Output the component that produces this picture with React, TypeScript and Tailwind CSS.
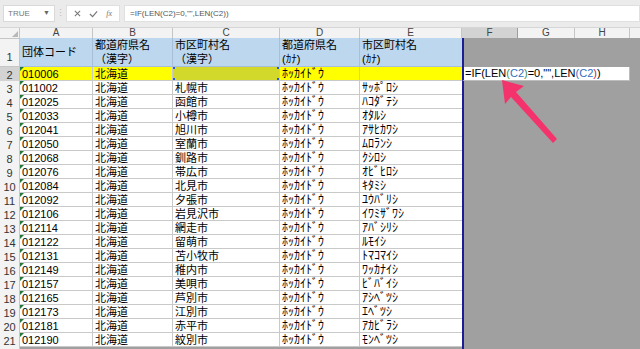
const cols = 'grid grid-cols-[20px_73px_80px_107px_80px_102px_56px_57px_55px_1fr]';

const rows: [string, string, string, string][] = [
  ['011002', '札幌市', 'ﾎｯｶｲﾄﾞｳ', 'ｻｯﾎﾟﾛｼ'],
  ['012025', '函館市', 'ﾎｯｶｲﾄﾞｳ', 'ﾊｺﾀﾞﾃｼ'],
  ['012033', '小樽市', 'ﾎｯｶｲﾄﾞｳ', 'ｵﾀﾙｼ'],
  ['012041', '旭川市', 'ﾎｯｶｲﾄﾞｳ', 'ｱｻﾋｶﾜｼ'],
  ['012050', '室蘭市', 'ﾎｯｶｲﾄﾞｳ', 'ﾑﾛﾗﾝｼ'],
  ['012068', '釧路市', 'ﾎｯｶｲﾄﾞｳ', 'ｸｼﾛｼ'],
  ['012076', '帯広市', 'ﾎｯｶｲﾄﾞｳ', 'ｵﾋﾞﾋﾛｼ'],
  ['012084', '北見市', 'ﾎｯｶｲﾄﾞｳ', 'ｷﾀﾐｼ'],
  ['012092', '夕張市', 'ﾎｯｶｲﾄﾞｳ', 'ﾕｳﾊﾞﾘｼ'],
  ['012106', '岩見沢市', 'ﾎｯｶｲﾄﾞｳ', 'ｲﾜﾐｻﾞﾜｼ'],
  ['012114', '網走市', 'ﾎｯｶｲﾄﾞｳ', 'ｱﾊﾞｼﾘｼ'],
  ['012122', '留萌市', 'ﾎｯｶｲﾄﾞｳ', 'ﾙﾓｲｼ'],
  ['012131', '苫小牧市', 'ﾎｯｶｲﾄﾞｳ', 'ﾄﾏｺﾏｲｼ'],
  ['012149', '稚内市', 'ﾎｯｶｲﾄﾞｳ', 'ﾜｯｶﾅｲｼ'],
  ['012157', '美唄市', 'ﾎｯｶｲﾄﾞｳ', 'ﾋﾞﾊﾞｲｼ'],
  ['012165', '芦別市', 'ﾎｯｶｲﾄﾞｳ', 'ｱｼﾍﾞﾂｼ'],
  ['012173', '江別市', 'ﾎｯｶｲﾄﾞｳ', 'ｴﾍﾞﾂｼ'],
  ['012181', '赤平市', 'ﾎｯｶｲﾄﾞｳ', 'ｱｶﾋﾞﾗｼ'],
  ['012190', '紋別市', 'ﾎｯｶｲﾄﾞｳ', 'ﾓﾝﾍﾞﾂｼ'],
];

const cell = 'relative h-[14px] border-r border-b border-[#c9c9c9] pl-[2px] text-[11px] leading-[14px] whitespace-nowrap overflow-hidden';
const kana = 'text-[12px]';

function Flag() {
  return <span className="absolute left-0 top-0 w-0 h-0 border-t-[4px] border-r-[4px] border-t-[#1f7a3a] border-r-transparent" />;
}

function RowHead({ n, active }: { n: number; active?: boolean }) {
  return (
    <div
      className={`flex items-center justify-center border-r border-b border-[#c6c6c6] text-[11px] text-[#333] ${
        active ? 'bg-[#d3d3d3]' : 'bg-[#f3f3f3]'
      }`}
    >
      {n}
    </div>
  );
}

function GrayTail() {
  return (
    <>
      <div className="bg-[#a0a0a0] border-l-2 border-l-[#1d1d96]" />
      <div className="bg-[#a0a0a0]" />
      <div className="bg-[#a0a0a0]" />
      <div className="bg-[#a0a0a0]" />
    </>
  );
}

export default function App() {
  return (
    <div
      className="relative w-[640px] h-[349px] overflow-hidden bg-[#a0a0a0]"
      style={{ fontFamily: '"Liberation Sans", "Noto Sans CJK JP", sans-serif' }}
    >
      {/* formula bar */}
      <div className="h-[28px] bg-[#ebebeb] flex items-start pt-[5px] border-b border-[#d6d6d6]">
        <div className="ml-[3px] w-[52px] h-[17px] bg-white border border-[#d9d9d9] flex items-center justify-between px-[4px] text-[8px] text-[#777]">
          <span>TRUE</span>
          <span className="text-[7px] text-[#666]">▼</span>
        </div>
        <div className="w-[11px] h-[17px] flex items-center justify-center text-[9px] text-[#bbb]">⋮</div>
        <div className="w-[54px] h-[17px] bg-white border border-[#e0e0e0] flex items-center justify-around px-[3px] text-[#777]">
          <svg width="7" height="7" viewBox="0 0 8 8" stroke="#777" strokeWidth="1.2">
            <path d="M1 1L7 7M7 1L1 7" />
          </svg>
          <svg width="9" height="8" viewBox="0 0 10 8" fill="none" stroke="#777" strokeWidth="1.3">
            <path d="M1 4L4 7L9 1" />
          </svg>
          <span className="italic text-[8px]" style={{ fontFamily: '"Liberation Serif", serif' }}>
            fx
          </span>
        </div>
        <div className="ml-[4px] flex-1 h-[17px] bg-white border border-[#e0e0e0] flex items-center pl-[5px] text-[8px] text-[#555]">
          =IF(LEN(C2)=0,"",LEN(C2))
        </div>
      </div>

      {/* column headers */}
      <div className={`${cols} h-[10px] bg-[#f3f3f3] text-[10px] leading-[10px] text-[#444]`}>
        <div className="relative border-r border-b border-[#c6c6c6]">
          <span className="absolute right-[1px] bottom-[1px] w-0 h-0 border-b-[6px] border-l-[6px] border-b-[#b8b8b8] border-l-transparent" />
        </div>
        {['A', 'B', 'C', 'D', 'E'].map((c) => (
          <div key={c} className="text-center border-r border-b border-[#c6c6c6]">{c}</div>
        ))}
        <div className="text-center bg-[#d3d3d3] border-r border-b border-[#9e9e9e]">F</div>
        <div className="text-center border-r border-b border-[#c6c6c6]">G</div>
        <div className="text-center border-r border-b border-[#c6c6c6]">H</div>
        <div className="border-b border-[#c6c6c6]" />
      </div>

      {/* row 1 */}
      <div className={`${cols} h-[29px]`}>
        <div className="flex items-end justify-center pb-[1px] bg-[#f3f3f3] border-r border-b border-[#c6c6c6] text-[11px] text-[#333]">1</div>
        <div className="flex items-center pl-[2px] bg-[#bdd7ee] border-r border-b border-[#a9bfd9] text-[11px]">団体コード</div>
        <div className="flex flex-col justify-center pl-[2px] bg-[#bdd7ee] border-r border-b border-[#a9bfd9] text-[11px] leading-[14px]">
          <span>都道府県名</span>
          <span>（漢字）</span>
        </div>
        <div className="flex flex-col justify-center pl-[2px] bg-[#bdd7ee] border-r border-b border-[#a9bfd9] text-[11px] leading-[14px]">
          <span>市区町村名</span>
          <span>（漢字）</span>
        </div>
        <div className="flex flex-col justify-center pl-[2px] bg-[#bdd7ee] border-r border-b border-[#a9bfd9] text-[11px] leading-[14px]">
          <span>都道府県名</span>
          <span className="text-[11px]">(ｶﾅ)</span>
        </div>
        <div className="flex flex-col justify-center pl-[2px] bg-[#bdd7ee] border-b border-[#a9bfd9] text-[11px] leading-[14px]">
          <span>市区町村名</span>
          <span className="text-[11px]">(ｶﾅ)</span>
        </div>
        <GrayTail />
      </div>

      {/* row 2 */}
      <div className={`${cols} h-[14px]`}>
        <RowHead n={2} active />
        <div className={`${cell} bg-[#ffff00]`}>
          <Flag />
          010006
        </div>
        <div className={`${cell} bg-[#ffff00]`}>北海道</div>
        <div className={`${cell} bg-[#d3d92b] border-[#9aa0b8]`}>
          <span className="absolute left-0 top-0 w-[2px] h-[2px] bg-[#2a5bd7]" />
          <span className="absolute right-0 top-0 w-[2px] h-[2px] bg-[#2a5bd7]" />
          <span className="absolute left-0 bottom-0 w-[2px] h-[2px] bg-[#2a5bd7]" />
          <span className="absolute right-0 bottom-0 w-[2px] h-[2px] bg-[#2a5bd7]" />
        </div>
        <div className={`${cell} ${kana} bg-[#ffff00]`}>ﾎｯｶｲﾄﾞｳ</div>
        <div className={`${cell} bg-[#ffff00] border-r-0`} />
        <div className="col-span-3 h-[14px] bg-white border-l-2 border-l-[#1d1d96] border-b border-r border-[#bdbdbd] pl-[1px] text-[11px] leading-[13px] whitespace-nowrap overflow-hidden">
          <span>=IF(LEN</span>
          <span className="text-[#3c8d3c]">(</span>
          <span className="text-[#2f6fc0]">C2</span>
          <span className="text-[#3c8d3c]">)</span>
          <span>=0,"",LEN</span>
          <span className="text-[#2f6fc0]">(</span>
          <span className="text-[#2f6fc0]">C2</span>
          <span className="text-[#c2185b]">)</span>
          <span>)</span>
        </div>
        <div className="bg-[#a0a0a0]" />
      </div>

      {rows.map(([code, city, pref, kanaName], i) => (
        <div key={i} className={`${cols} h-[14px]`}>
          <RowHead n={i + 3} />
          <div className={`${cell} bg-white`}>
            <Flag />
            {code}
          </div>
          <div className={`${cell} bg-white`}>北海道</div>
          <div className={`${cell} bg-white`}>{city}</div>
          <div className={`${cell} ${kana} bg-white`}>{pref}</div>
          <div className={`${cell} ${kana} bg-white border-r-0`}>{kanaName}</div>
          <GrayTail />
        </div>
      ))}

      {/* annotation arrow */}
      <svg className="absolute left-0 top-0 pointer-events-none" width="640" height="349" viewBox="0 0 640 349">
        <polygon points="502,80 524,86 516,92 557,139 553,143 511,97 505,104" fill="#f4336d" />
      </svg>
    </div>
  );
}
